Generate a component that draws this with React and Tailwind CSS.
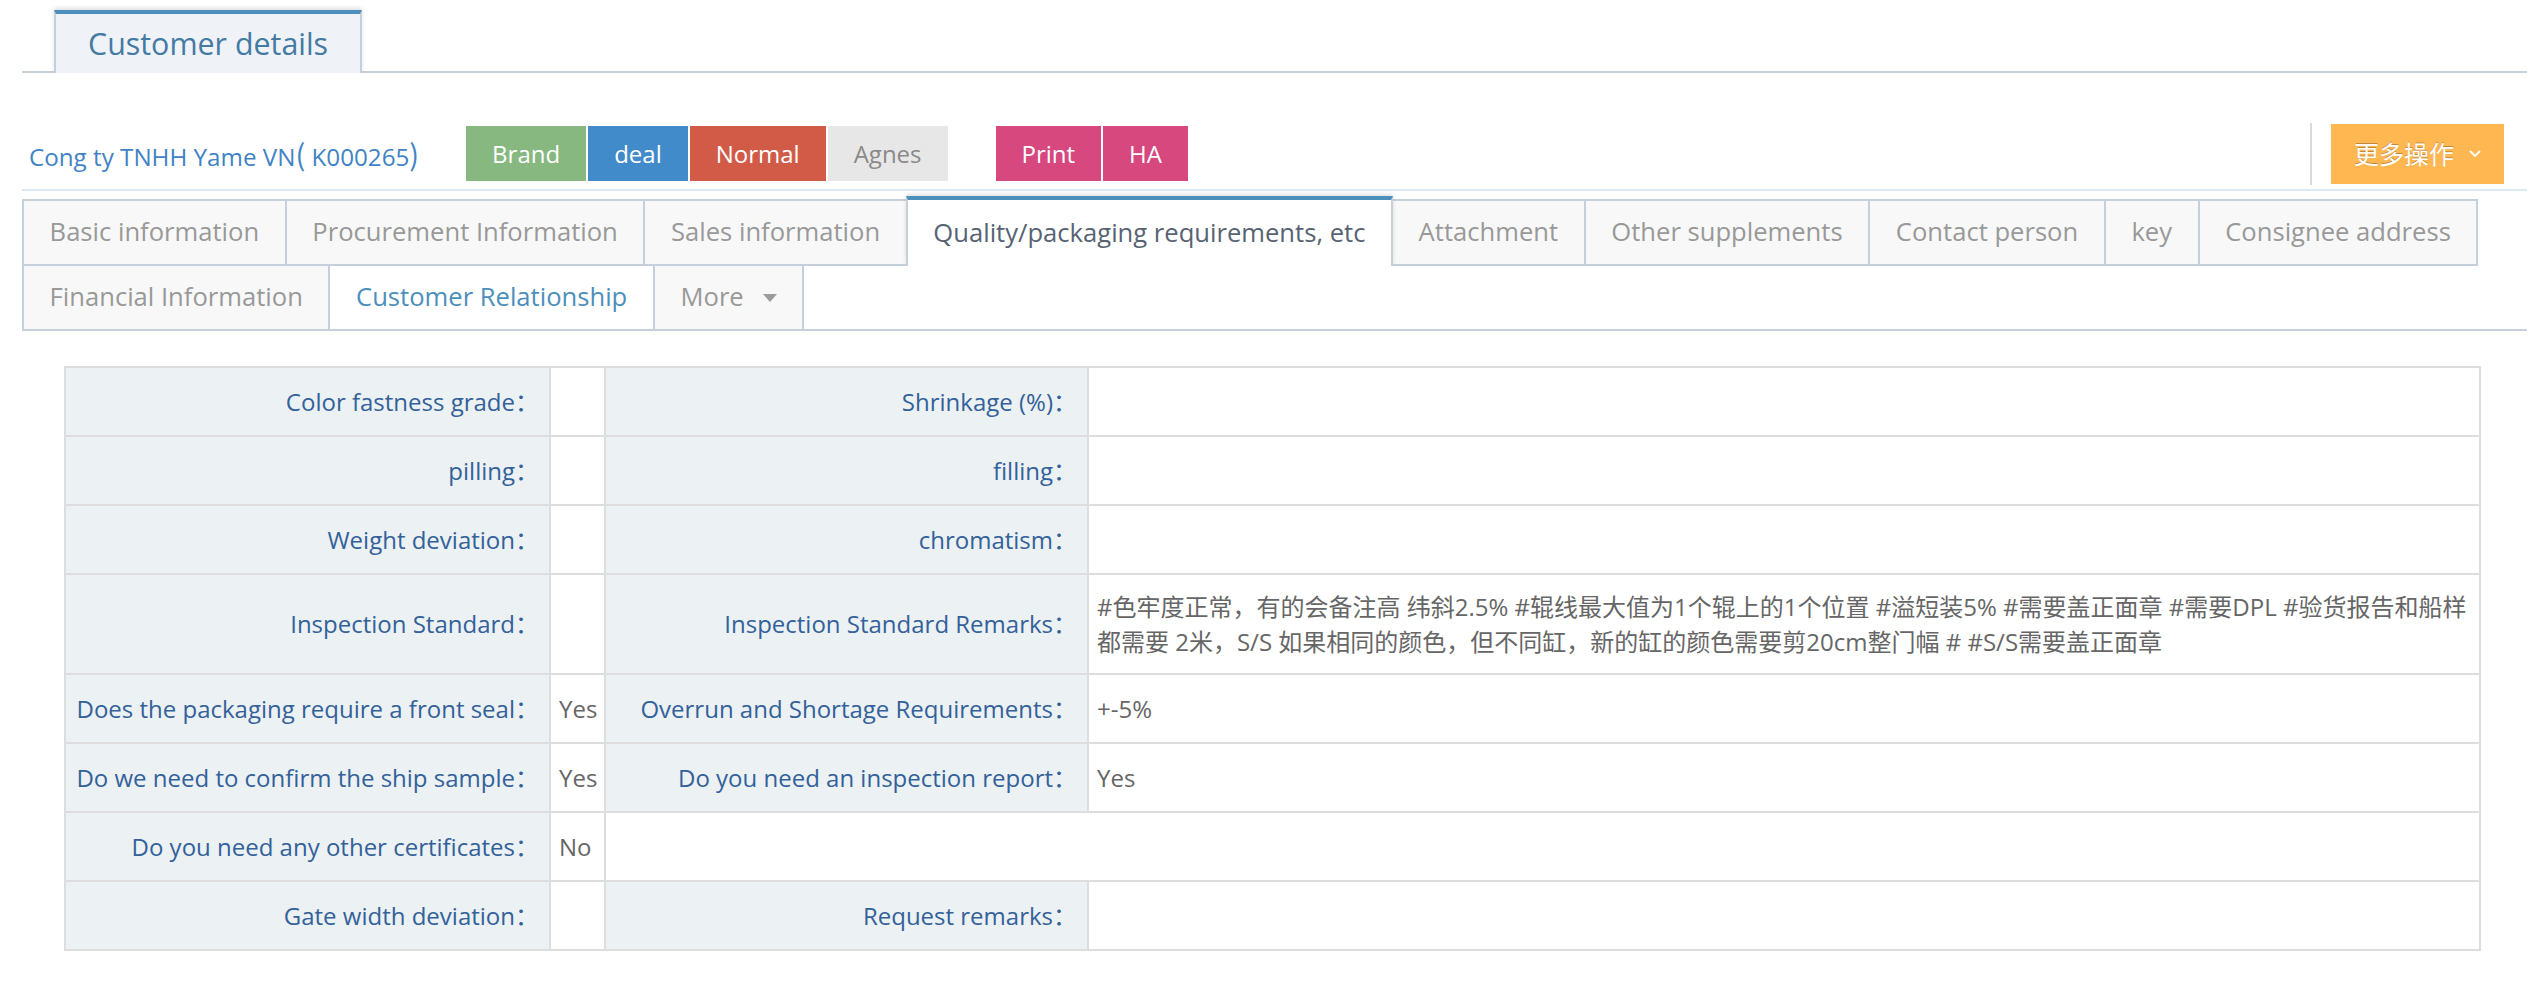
import React from "react";

const FONT = "font-['Open_Sans','Noto_Sans_CJK_SC',sans-serif]";

const tabsRow = [
  { label: "Basic information" },
  { label: "Procurement Information" },
  { label: "Sales information" },
  { label: "Quality/packaging requirements, etc", active: true },
  { label: "Attachment" },
  { label: "Other supplements" },
  { label: "Contact person" },
  { label: "key" },
  { label: "Consignee address" },
  { label: "Financial Information" },
  { label: "Customer Relationship", hover: true },
  { label: "More", more: true },
];

const LONG_1 =
  "#色牢度正常，有的会备注高 纬斜2.5% #辊线最大值为1个辊上的1个位置 #溢短装5% #需要盖正面章 #需要DPL #验货报告和船样";
const LONG_2 = "都需要 2米，S/S 如果相同的颜色，但不同缸，新的缸的颜色需要剪20cm整门幅 # #S/S需要盖正面章";

const rows = [
  ["Color fastness grade", "", "Shrinkage (%)", ""],
  ["pilling", "", "filling", ""],
  ["Weight deviation", "", "chromatism", ""],
  ["Inspection Standard", "", "Inspection Standard Remarks", "LONG"],
  ["Does the packaging require a front seal", "Yes", "Overrun and Shortage Requirements", "+-5%"],
  ["Do we need to confirm the ship sample", "Yes", "Do you need an inspection report", "Yes"],
  ["Do you need any other certificates", "No", null, null],
  ["Gate width deviation", "", "Request remarks", ""],
];

function Label({ children }) {
  return (
    <td className="bg-[#ecf1f4] text-[#336199] text-right pr-[10px] pl-2 border-2 border-[#dddddd] h-[69px] align-middle whitespace-nowrap">
      {children}：
    </td>
  );
}

function Value({ children, colSpan }) {
  return (
    <td
      colSpan={colSpan}
      className="text-[#666666] pl-[8px] pr-2 py-[14px] border-2 border-[#dddddd] h-[69px] align-middle leading-[35px]"
    >
      {children}
    </td>
  );
}

export default function App() {
  return (
    <div className={`${FONT} bg-white min-h-screen pt-[10px] pl-[22px] pr-[7px]`}>
      {/* page header tab */}
      <div className="flex border-b-2 border-[#c5d0dc] pl-[32px]">
        <div className="-mb-[2px] h-[63px] flex items-center px-[32px] bg-[#eff3f8] border-t-4 border-t-[#4c8fbd] border-x-2 border-x-[#c5d0dc] text-[30.4px] text-[#457aa2] shadow-[0_-2px_4px_rgba(0,0,0,0.12)]">
          Customer details
        </div>
      </div>

      {/* company row */}
      <div className="mt-[45px] h-[73px] flex items-center border-b-2 border-[#dce8f2]">
        <div className="pl-[7px] text-[24.2px] text-[#4183c4] whitespace-nowrap">
          Cong ty TNHH Yame VN<span className="text-[29px] font-['Noto_Sans_CJK_SC',sans-serif]">(</span> K000265<span className="text-[29px] font-['Noto_Sans_CJK_SC',sans-serif]">)</span>
        </div>
        <div className="ml-[47px] flex items-center gap-[2px] text-[24px]">
          <span className="h-[55px] px-[26px] flex items-center bg-[#87b87f] text-white">Brand</span>
          <span className="h-[55px] px-[26px] flex items-center bg-[#428bca] text-white">deal</span>
          <span className="h-[55px] px-[26px] flex items-center bg-[#d15b47] text-white">Normal</span>
          <span className="h-[55px] px-[26px] flex items-center bg-[#e7e7e7] text-[#8a8a8a]">Agnes</span>
          <span className="ml-[46px] h-[55px] px-[26px] flex items-center bg-[#d6487e] text-white">Print</span>
          <span className="h-[55px] px-[26px] flex items-center bg-[#d6487e] text-white">HA</span>
        </div>
        <div className="ml-auto flex items-center mr-[23px]">
          <div className="w-[2px] h-[62px] bg-[#dadada]"></div>
          <button className="ml-[19px] h-[60px] pl-[23px] pr-[22px] flex items-center bg-[#ffb752] text-white text-[25px] [text-shadow:0_-1px_0_rgba(0,0,0,0.25)]">
            <span className="font-['Noto_Sans_CJK_SC',sans-serif]">更多操作</span>
            <svg className="ml-[14px]" width="14" height="9" viewBox="0 0 14 9" fill="none">
              <path d="M2 2 L7 7 L12 2" stroke="white" strokeWidth="1.8" />
            </svg>
          </button>
        </div>
      </div>

      {/* tabs */}
      <div className="mt-[8px] flex flex-wrap border-b-2 border-[#c5d0dc] text-[25.6px]">
        {tabsRow.map((t) =>
          t.active ? (
            <div
              key={t.label}
              className="relative z-10 -mt-[3px] -mr-[2px] -mb-[2px] h-[70px] px-[25.6px] flex items-center bg-white border-t-4 border-t-[#4c8fbd] border-x-2 border-x-[#c5d0dc] text-[#576373] whitespace-nowrap shadow-[0_-2px_4px_rgba(0,0,0,0.12)]"
            >
              {t.label}
            </div>
          ) : (
            <div
              key={t.label}
              className={`-mr-[2px] -mb-[2px] h-[67px] px-[25.6px] flex items-center border-2 border-[#c5d0dc] whitespace-nowrap ${
                t.hover ? "bg-white text-[#4c8fbd]" : "bg-[#f8f8f8] text-[#999999]"
              }`}
            >
              {t.label}
              {t.more && (
                <span className="ml-[19px] w-0 h-0 border-x-[7px] border-x-transparent border-t-[8px] border-t-[#9c9c9c]"></span>
              )}
            </div>
          )
        )}
      </div>

      {/* table */}
      <div className="mt-[35px] ml-[42px] mr-[46px] text-[24px]">
        <table className="w-full table-fixed border-collapse">
          <colgroup>
            <col className="w-[485px]" />
            <col className="w-[55px]" />
            <col className="w-[483px]" />
            <col />
          </colgroup>
          <tbody>
            {rows.map((r, i) => (
              <tr key={i}>
                <Label>{r[0]}</Label>
                <Value>{r[1]}</Value>
                {r[2] === null ? (
                  <Value colSpan={2}></Value>
                ) : (
                  <>
                    <Label>{r[2]}</Label>
                    <Value>
                      {r[3] === "LONG" ? (
                        <>
                          {LONG_1}
                          <br />
                          {LONG_2}
                        </>
                      ) : (
                        r[3]
                      )}
                    </Value>
                  </>
                )}
              </tr>
            ))}
          </tbody>
        </table>
      </div>
    </div>
  );
}
